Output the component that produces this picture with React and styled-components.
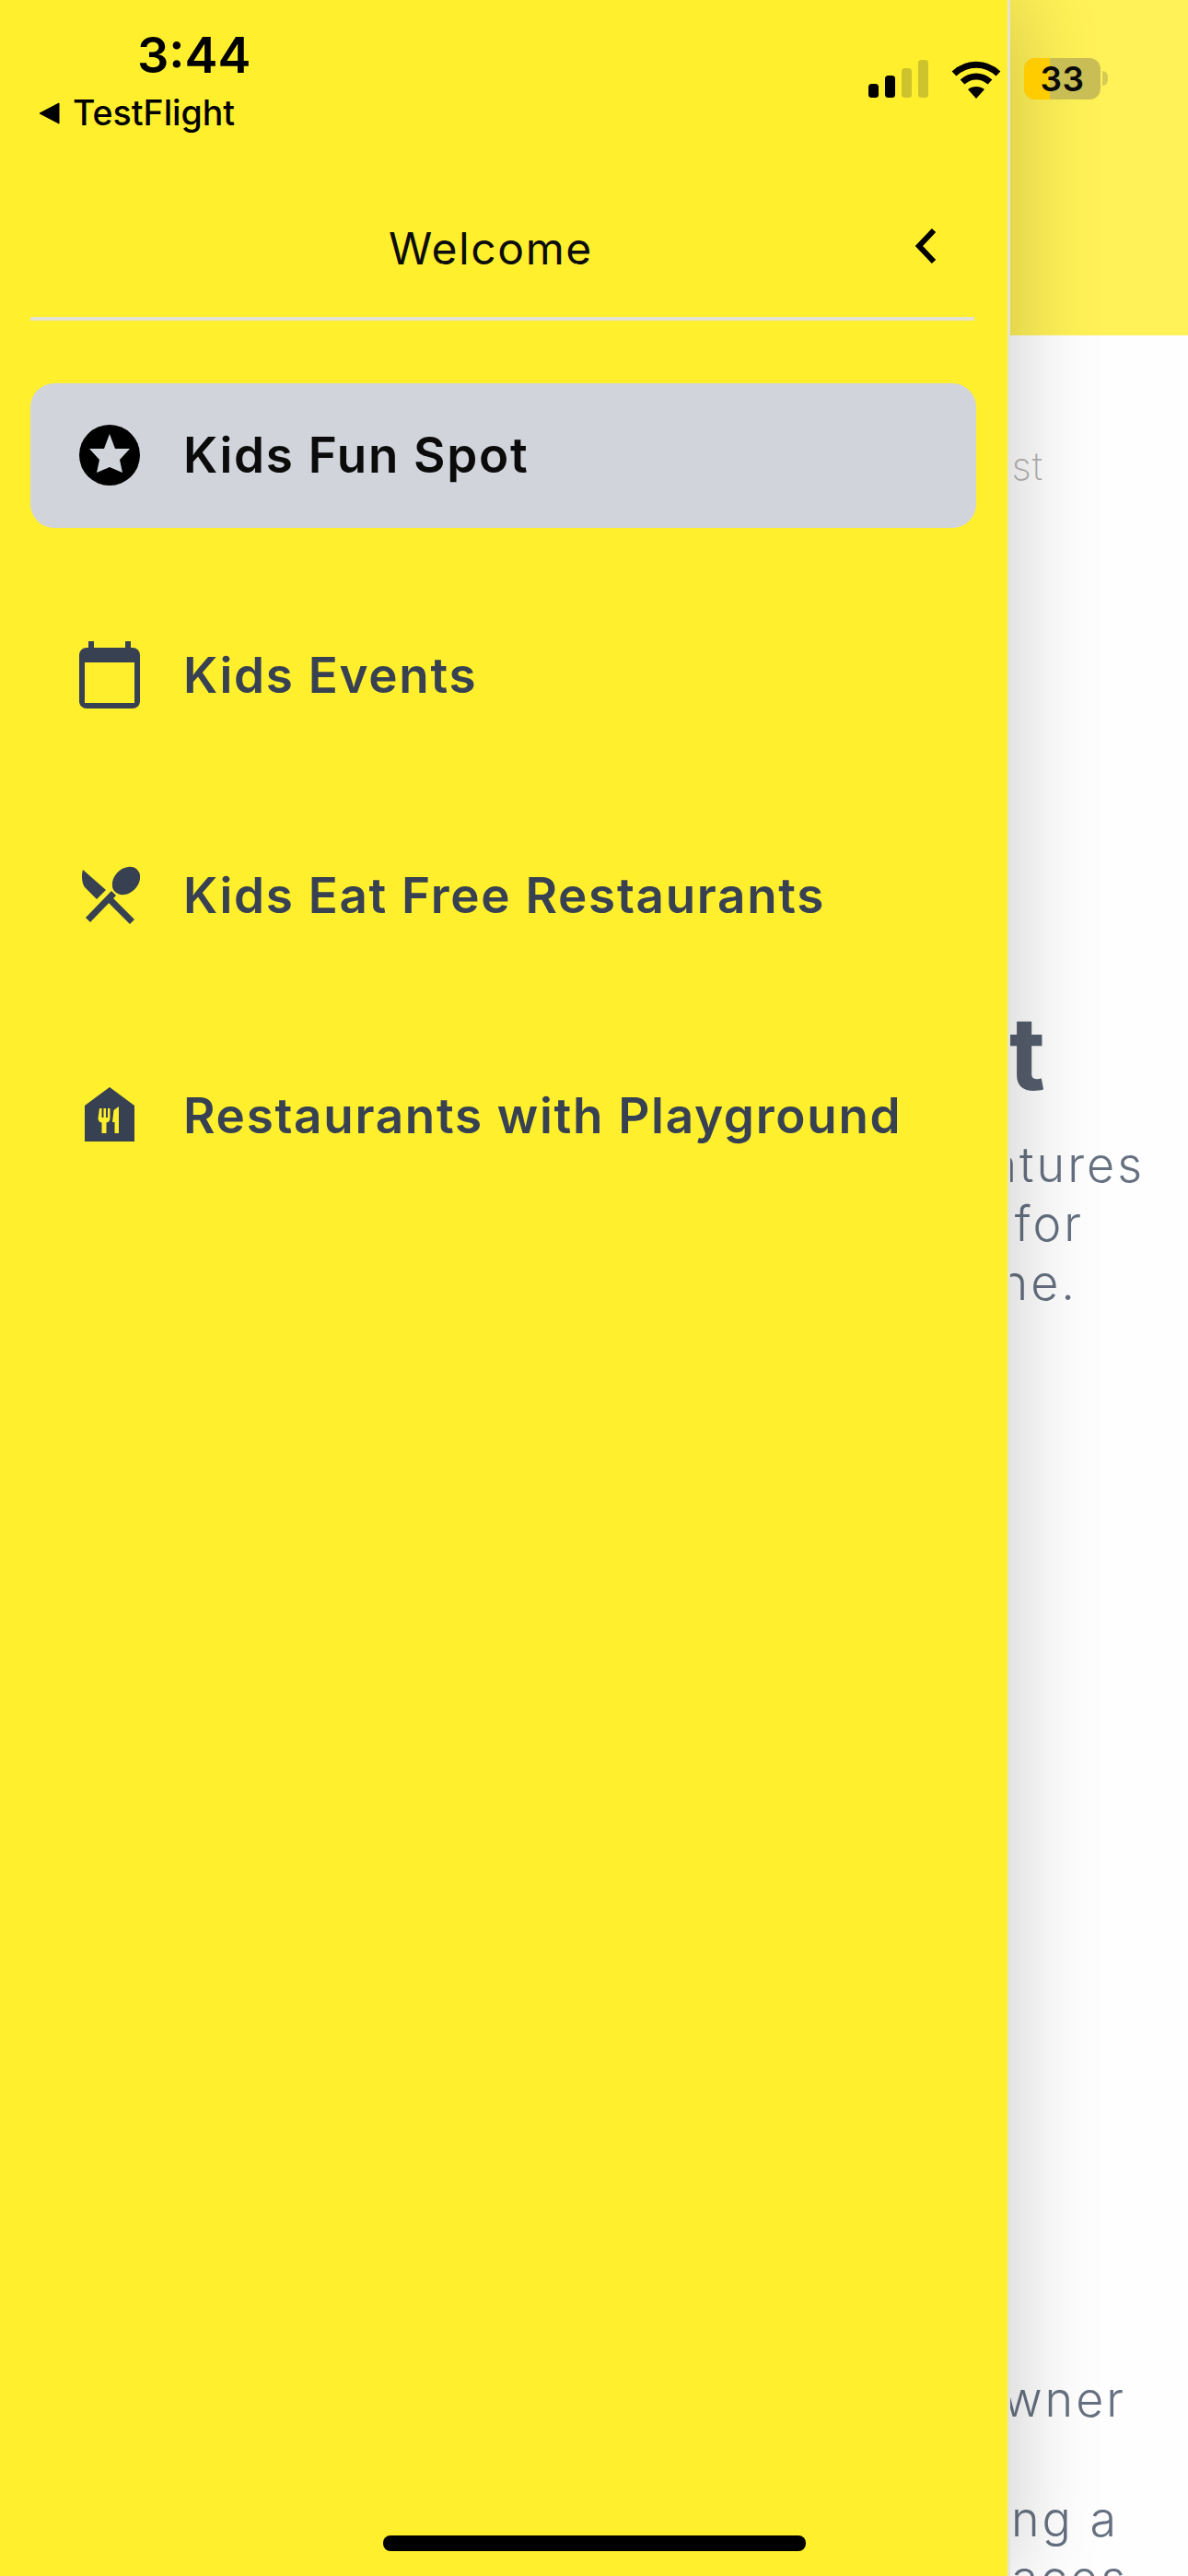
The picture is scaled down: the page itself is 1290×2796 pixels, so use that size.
import React from 'react';
import styled, { createGlobalStyle } from 'styled-components';

const YELLOW = '#FFEF2D';
const SLATE = '#374151';
const BODY_FONT = '"Inter", "Noto Sans", sans-serif';

const GlobalStyle = createGlobalStyle`
  html, body {
    margin: 0;
    padding: 0;
    background: #fff;
  }
  * {
    box-sizing: border-box;
  }
`;

const Screen = styled.div`
  position: relative;
  width: 1290px;
  height: 2796px;
  overflow: hidden;
  display: flex;
  font-family: ${BODY_FONT};
`;

/* drawer */
const Drawer = styled.aside`
  flex: 0 0 1094px;
  position: relative;
  z-index: 2;
  height: 100%;
  padding: 0 33px;
  background: ${YELLOW};
  border-right: 3px solid ${YELLOW};
  box-shadow: 3px 0 0 #e4e4d4, 6px 0 90px rgba(0, 0, 0, 0.2);
`;

const DrawerHeader = styled.header`
  height: 348px;
  padding: 0 41px 45px 39px;
  display: flex;
  align-items: flex-end;
  border-bottom: 4px solid #e3e3cf;
`;

const DrawerTitle = styled.h1`
  flex: 1;
  margin: 0;
  text-align: center;
  font-size: 48px;
  line-height: 58px;
  font-weight: 400;
  letter-spacing: 1.6px;
  color: #0c0c0c;
`;

const BackIcon = styled.svg`
  width: 23px;
  height: 40px;
  margin-bottom: 12px;
`;

const Nav = styled.nav`
  margin: 68px -2px 0 0;
  display: flex;
  flex-direction: column;
  gap: 82px;
`;

const NavRow = styled.a`
  height: 157px;
  padding-left: 53px;
  display: flex;
  align-items: center;
  gap: 47px;
  border-radius: 26px;
  background: ${(p) => (p.$active ? '#D1D5DB' : 'transparent')};
  color: ${(p) => (p.$active ? '#0b0b0b' : SLATE)};
`;

const NavIcon = styled.svg`
  flex: 0 0 66px;
  width: 66px;
  height: 76px;
`;

const NavLabel = styled.span`
  font-size: 53px;
  line-height: 60px;
  margin-top: -2px;
  font-weight: 600;
  letter-spacing: 1.7px;
  white-space: nowrap;
`;

/* page behind the drawer */
const Page = styled.main`
  flex: 1;
  min-width: 0;
  height: 100%;
  display: flex;
  flex-direction: column;
  background: #fefefe;
`;

const PageHeader = styled.div`
  flex: 0 0 364px;
  background: #fff157;
`;

const Crumb = styled.div`
  margin-top: 122px;
  height: 40px;
  padding-right: 157px;
  display: flex;
  justify-content: flex-end;
  font-size: 42px;
  line-height: 40px;
  font-weight: 200;
  letter-spacing: 1px;
  color: #b4b4b4;
`;

const Heading = styled.div`
  margin-top: 557px;
  height: 120px;
  padding-right: 155px;
  display: flex;
  justify-content: flex-end;
  font-size: 110px;
  line-height: 120px;
  font-weight: 700;
  color: #555e6d;
`;

const Paragraph = styled.div`
  margin-top: ${(p) => p.$top}px;
  display: flex;
  flex-direction: column;
`;

const Line = styled.div`
  height: 64px;
  display: flex;
  justify-content: flex-end;
  padding-right: ${(p) => p.$right}px;
  font-size: 52px;
  line-height: 64px;
  font-weight: 300;
  letter-spacing: 3px;
  white-space: nowrap;
  color: #667080;
`;

/* iOS chrome on top of everything */
const StatusBar = styled.div`
  position: absolute;
  z-index: 3;
  top: 0;
  left: 0;
  width: 100%;
  padding: 28px 0 0 41px;
  display: flex;
  justify-content: space-between;
  color: #000;
`;

const StatusLeft = styled.div`
  display: flex;
  flex-direction: column;
`;

const Clock = styled.div`
  padding-left: 108px;
  font-size: 54px;
  line-height: 64px;
  font-weight: 600;
`;

const BackToApp = styled.div`
  margin-top: 9px;
  display: flex;
  align-items: center;
  gap: 14px;
  font-size: 37.5px;
  line-height: 44px;
  font-weight: 500;
`;

const BackCaret = styled.svg`
  width: 24px;
  height: 28px;
`;

const StatusRight = styled.div`
  width: 347px;
  padding-top: 37px;
  display: flex;
  align-items: flex-start;
`;

const Signal = styled.svg`
  width: 65px;
  height: 41px;
`;

const Wifi = styled.svg`
  width: 54px;
  height: 42px;
  margin-left: 25px;
`;

const Battery = styled.div`
  position: relative;
  width: 83px;
  height: 45px;
  margin: -2px 0 0 25px;
  border-radius: 12px;
  overflow: hidden;
  background: #c9be55;
  display: flex;
  align-items: center;
  justify-content: center;
  font-size: 37px;
  font-weight: 600;
  letter-spacing: 0.5px;
  color: #0a0a0a;

  &::before {
    content: '';
    position: absolute;
    inset: 0 auto 0 0;
    width: 28px;
    background: #ffcc00;
  }

  span {
    position: relative;
  }
`;

const BatteryNub = styled.div`
  width: 6px;
  height: 16px;
  margin: 12px 0 0 2px;
  border-radius: 0 8px 8px 0;
  background: #d6cb55;
`;

const HomeBar = styled.div`
  position: absolute;
  z-index: 3;
  left: 416px;
  bottom: 27px;
  width: 459px;
  height: 17px;
  border-radius: 8px;
  background: #000;
`;

const StarIcon = () => (
  <NavIcon viewBox="0 0 66 76">
    <circle cx="33" cy="37" r="33" fill="#000" />
    <polygon
      fill="#D1D5DB"
      points="33,14 39,30 55,30 44,42 47,56 33,50 19,56 22,42 11,30 27,30"
    />
  </NavIcon>
);

const CalendarIcon = () => (
  <NavIcon viewBox="0 0 66 76">
    <path
      fill={SLATE}
      fillRule="evenodd"
      d="M10 0h6v7h34V0h6v7h2a8 8 0 0 1 8 8v50a8 8 0 0 1-8 8H8a8 8 0 0 1-8-8V15a8 8 0 0 1 8-8h2zM6 23v44h54V23z"
    />
  </NavIcon>
);

const CutleryIcon = () => (
  <NavIcon viewBox="0 0 66 76">
    <g fill={SLATE}>
      <ellipse cx="51" cy="21" rx="17" ry="13" transform="rotate(-45 51 21)" />
      <path d="M35 32l5 5L12 66l-5-5z" />
      <path d="M4 9l25 22-10 10L6 28C3 24 2 15 4 9z" />
      <path d="M31 44l5-5 24 24-5 5z" />
    </g>
  </NavIcon>
);

const HouseIcon = () => (
  <NavIcon viewBox="0 0 66 76">
    <path fill={SLATE} d="M33 6l27 20v39H6V26z" />
    <path
      fill={YELLOW}
      d="M22 29h2.500v10h2V29h2.500v10h2V29h2.500v11c0 2.500-1.500 4-4 4.500V56h-5V44.500c-2.500-.5-4-2-4-4.500zM37.500 31l5.500-4v29h-4.500V44H36z"
    />
  </NavIcon>
);

const menu = [
  { label: 'Kids Fun Spot', Icon: StarIcon, active: true },
  { label: 'Kids Events', Icon: CalendarIcon },
  { label: 'Kids Eat Free Restaurants', Icon: CutleryIcon },
  { label: 'Restaurants with Playground', Icon: HouseIcon },
];

const bars = [
  { x: 0, h: 15, on: true },
  { x: 18, h: 24, on: true },
  { x: 36, h: 32 },
  { x: 54, h: 41 },
];

const App = () => (
  <Screen>
    <GlobalStyle />
    <Drawer>
      <DrawerHeader>
        <DrawerTitle>Welcome</DrawerTitle>
        <BackIcon viewBox="0 0 23 40">
          <path d="M20 3L4 20l16 17" fill="none" stroke="#000" strokeWidth="6" />
        </BackIcon>
      </DrawerHeader>
      <Nav>
        {menu.map(({ label, Icon, active }) => (
          <NavRow key={label} $active={active}>
            <Icon />
            <NavLabel>{label}</NavLabel>
          </NavRow>
        ))}
      </Nav>
    </Drawer>

    <Page>
      <PageHeader />
      <Crumb>st</Crumb>
      <Heading>t</Heading>
      <Paragraph $top={30}>
        <Line $right={47}>atures</Line>
        <Line $right={113}>for</Line>
        <Line $right={120}>ne.</Line>
      </Paragraph>
      <Paragraph $top={1148}>
        <Line $right={67}>wner</Line>
      </Paragraph>
      <Paragraph $top={66}>
        <Line $right={75}>ng a</Line>
        <Line $right={65}>laces</Line>
      </Paragraph>
    </Page>

    <StatusBar>
      <StatusLeft>
        <Clock>3:44</Clock>
        <BackToApp>
          <BackCaret viewBox="0 0 24 28">
            <path d="M23 3v22L2 14z" fill="#000" stroke="#000" strokeLinejoin="round" />
          </BackCaret>
          TestFlight
        </BackToApp>
      </StatusLeft>
      <StatusRight>
        <Signal viewBox="0 0 65 41">
          {bars.map((b) => (
            <rect
              key={b.x}
              x={b.x}
              y={41 - b.h}
              width="11"
              height={b.h}
              rx="3.5"
              fill={b.on ? '#000' : '#cdc32c'}
            />
          ))}
        </Signal>
        <Wifi viewBox="0 0 54 42">
          <g fill="none" stroke="#000" strokeWidth="7">
            <path d="M3 15c14-13 34-13 48 0" />
            <path d="M12 24c9-8 21-8 30 0" />
          </g>
          <path d="M18 32c5-4 13-4 18 0L27 42z" fill="#000" />
        </Wifi>
        <Battery>
          <span>33</span>
        </Battery>
        <BatteryNub />
      </StatusRight>
    </StatusBar>
    <HomeBar />
  </Screen>
);

export default App;
